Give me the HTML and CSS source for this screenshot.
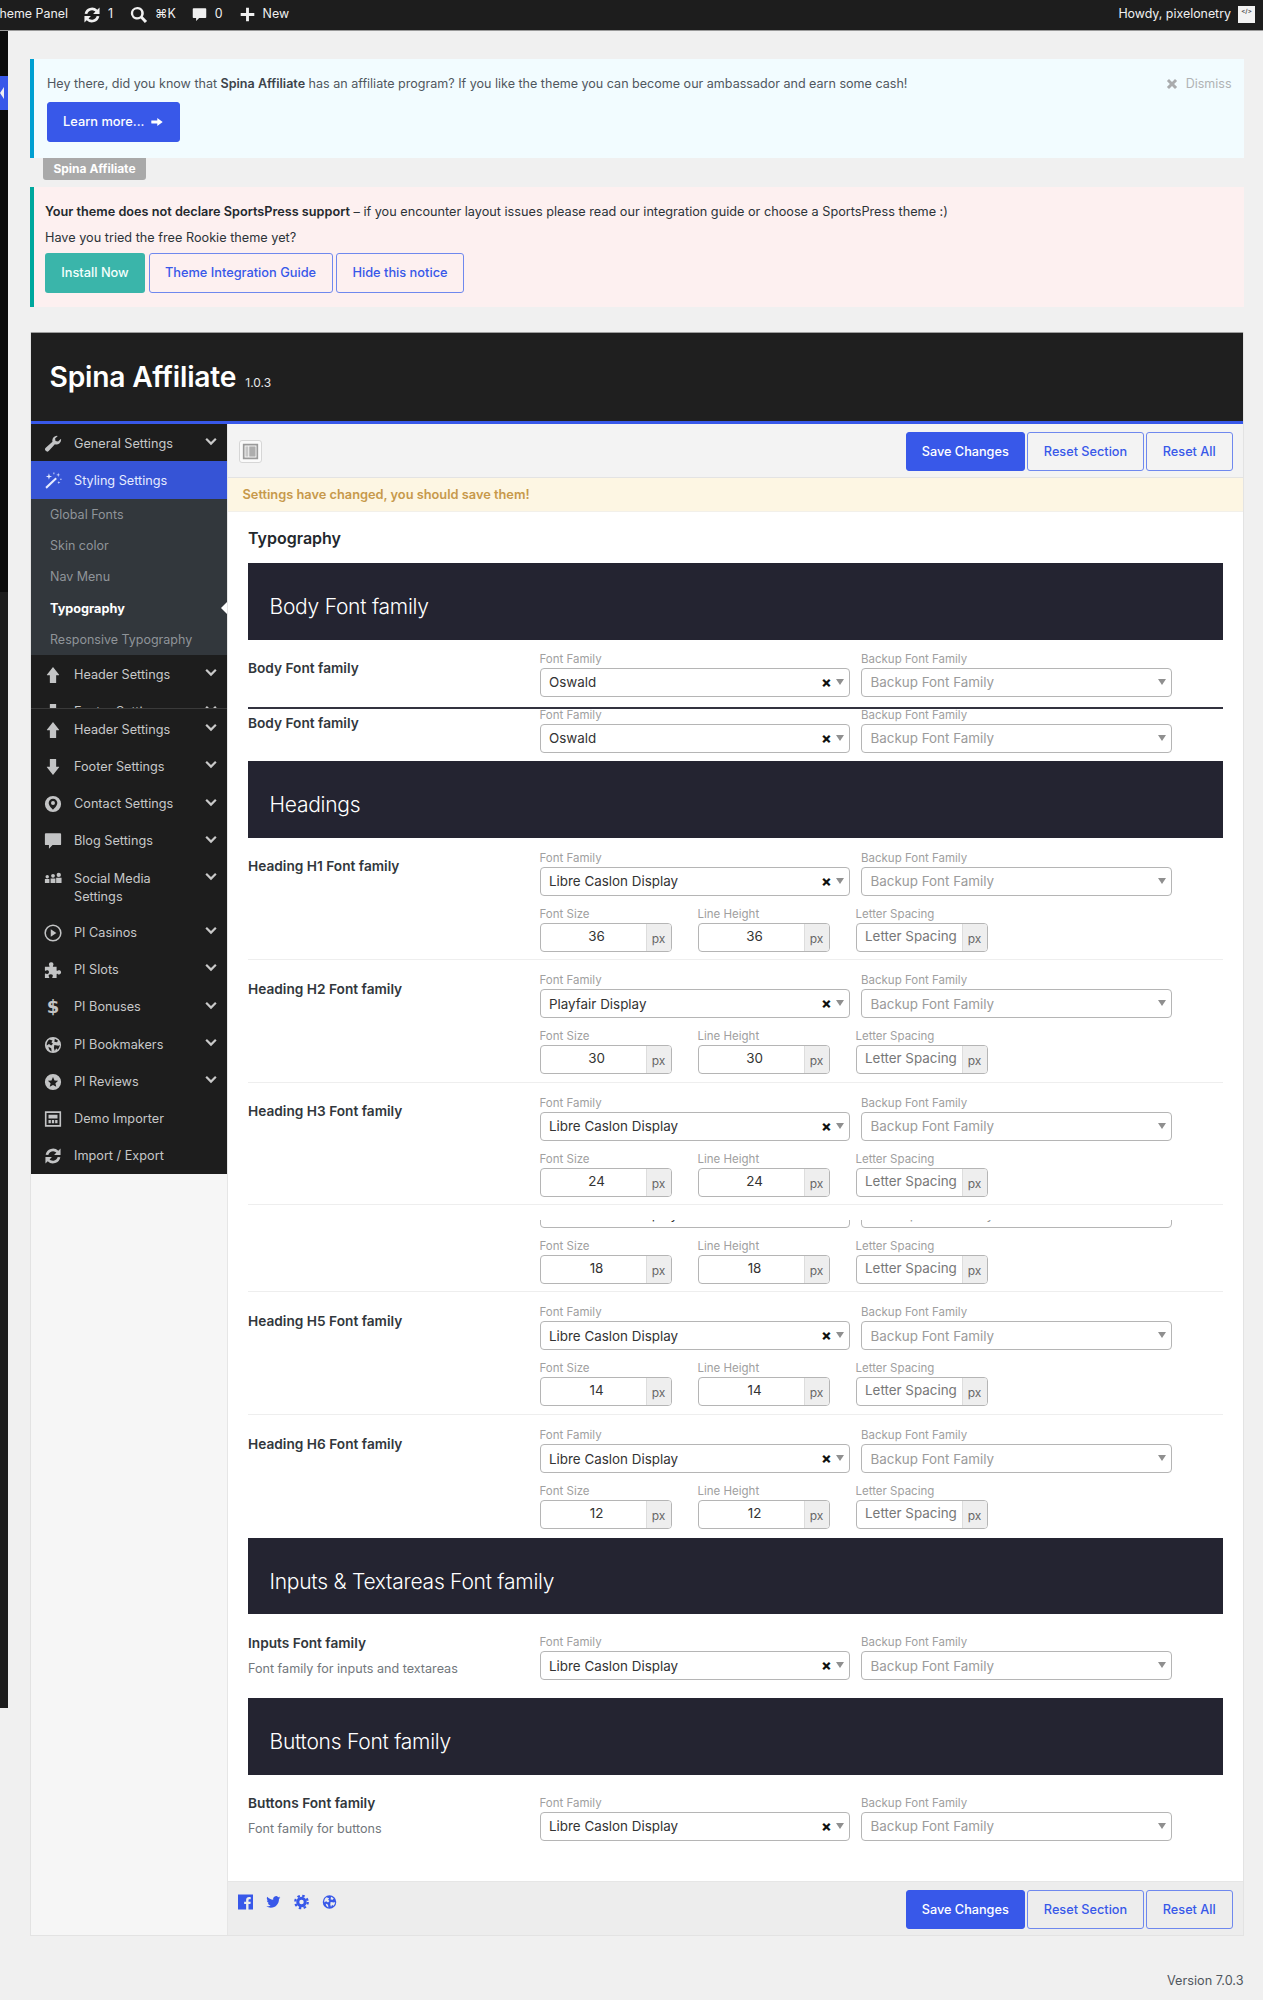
FILE: index.html
```html
<!DOCTYPE html>
<html lang="en">
<head>
<meta charset="utf-8">
<title>Spina Affiliate Theme Panel</title>
<link rel="stylesheet" href="styles.css">
</head>
<body>
<svg class="sprite" width="0" height="0" aria-hidden="true">
  <symbol id="i-wrench" viewBox="0 0 20 20"><path d="M19 4.800a5.200 5.200 0 0 1-6.900 5.400L5.200 17.700a2.300 2.300 0 0 1-3.300-.1 2.300 2.300 0 0 1 0-3.300l7.500-6.900A5.200 5.200 0 0 1 15.300 1l-3 2.800.5 2.800 2.800.6 3-2.800c.3.100.4.300.4.400z"/></symbol>
  <symbol id="i-wand" viewBox="0 0 20 20"><path d="M1.500 16.800 12.800 6.200l1.500 1.600L3 18.500z"/><path d="M5.500 1.500l.8 2.700 2.700.8-2.700.8-.8 2.700-.8-2.700L2 5l2.700-.8zM15.800 .8l.5 1.900 1.900.5-1.900.5-.5 1.900-.5-1.900-1.900-.5 1.900-.5zM16.500 10l.4 1.300 1.300.4-1.300.4-.4 1.300-.4-1.300-1.300-.4 1.300-.4zM10.500 .5h1v2h-1zM18 7.500h1.500v1H18z"/></symbol>
  <symbol id="i-up" viewBox="0 0 20 20"><path d="M10 1l6.800 8.800c.2.300 0 .6-.3.600h-3v8.100c0 .3-.2.500-.5.500H7c-.3 0-.5-.2-.5-.5v-8.100h-3c-.3 0-.5-.3-.3-.6z"/></symbol>
  <symbol id="i-down" viewBox="0 0 20 20"><path d="M10 19l6.800-8.800c.2-.3 0-.6-.3-.6h-3V1.500c0-.3-.2-.5-.5-.5H7c-.3 0-.5.200-.5.500v8.100h-3c-.3 0-.5.300-.3.600z"/></symbol>
  <symbol id="i-marker" viewBox="0 0 20 20"><path fill-rule="evenodd" d="M10 1a9 9 0 1 0 0 18 9 9 0 1 0 0-18zM10 4.200A4.800 4.800 0 0 0 5.200 9c0 3.200 4.800 7.500 4.800 7.500s4.800-4.300 4.800-7.500A4.800 4.800 0 0 0 10 4.200z"/><circle cx="10" cy="9" r="2.200"/></symbol>
  <symbol id="i-comment" viewBox="0 0 20 20"><path d="M2 1.500h16c.6 0 1 .4 1 1v11c0 .6-.4 1-1 1H9.500L5.500 18.500v-4H2c-.6 0-1-.4-1-1v-11c0-.6.4-1 1-1z"/></symbol>
  <symbol id="i-group" viewBox="0 0 20 20"><circle cx="3.600" cy="7.500" r="1.900"/><circle cx="10" cy="6.500" r="2.100"/><circle cx="16.400" cy="5.500" r="2.400"/><path d="M1 10h5v4.500H1zM7.300 9.500h5.400v5H7.300zM13.500 8.500h6v6h-6z"/></symbol>
  <symbol id="i-play" viewBox="0 0 20 20"><circle cx="10" cy="10" r="8.700" fill="none" stroke="currentColor" stroke-width="1.700"/><path d="M7.500 5.800l6.300 4.200-6.300 4.200z"/></symbol>
  <symbol id="i-puzzle" viewBox="0 0 20 20"><path d="M1 6.500h4.500c.8 0 .8-.8.300-1.500-.8-1.200-.3-3.500 2.200-3.500s3 2.300 2.200 3.500c-.5.700-.5 1.500.3 1.500H14v3.800c0 .8.800.8 1.500.3 1.200-.8 3.500-.3 3.500 2s-2.300 2.800-3.500 2c-.7-.5-1.500-.5-1.500.3V19H9.800c-.8 0-.8-.8-.3-1.500.8-1.200.3-2.800-2-2.800s-2.800 1.600-2 2.800c.5.700.5 1.500-.3 1.500H1v-4.600c0-.8.800-.8 1.500-.3 1.200.8 3 .3 3-1.800s-1.800-2.600-3-1.800c-.7.500-1.500.5-1.500-.3z"/></symbol>
  <symbol id="i-globe" viewBox="0 0 20 20"><path fill-rule="evenodd" d="M10 1a9 9 0 1 0 0 18 9 9 0 1 0 0-18zM6 3.800l3.500 1.200L8.200 7l1.800 1.500L8 10.500 5.500 9 3 10.500C2.800 7.500 4 5 6 3.800zM12 3l3.500 2-1 2-3-.5zM11.500 10l4.500.8 1.500-.8c0 2-1 4-2.500 5.200l-1.500-1.500-1.500 3-1-3.500zM5 12l3 1.500.5 3.800C6.500 16.500 5 14.500 5 12z"/></symbol>
  <symbol id="i-star" viewBox="0 0 20 20"><path fill-rule="evenodd" d="M10 1a9 9 0 1 0 0 18 9 9 0 1 0 0-18zM10 4.500l1.700 3.700 4 .4-3 2.700.9 4L10 13.300l-3.600 2 .9-4-3-2.700 4-.4z"/></symbol>
  <symbol id="i-demo" viewBox="0 0 20 20"><path fill-rule="evenodd" d="M1 1.500h18v17H1zM2.800 3.200v13.600h14.400V3.200z"/><path d="M5 5.200h10v4.300H5zM5 11h2.600v3.800H5zM8.700 11h2.600v3.800H8.700zM12.400 11H15v3.800h-2.600z"/></symbol>
  <symbol id="i-refresh" viewBox="0 0 20 20"><path d="M1.800 8.500A8.400 8.400 0 0 1 15.900 4.100L18.400 1.600v7.200h-7.200l2.600-2.600A5.500 5.500 0 0 0 4.800 8.800zM18.200 11.500A8.400 8.400 0 0 1 4.100 15.900L1.600 18.400v-7.200h7.200l-2.600 2.600A5.500 5.500 0 0 0 15.200 11.200z"/></symbol>
  <symbol id="i-search" viewBox="0 0 20 20"><path fill-rule="evenodd" d="M8 1a7 7 0 1 0 3.900 12.800l4.600 5.200 2.500-2.300-4.800-5A7 7 0 0 0 8 1zM8 3.500a4.500 4.500 0 1 1 0 9 4.500 4.500 0 0 1 0-9z"/></symbol>
  <symbol id="i-plus" viewBox="0 0 20 20"><path d="M8.300 2h3.400v6.300H18v3.400h-6.300V18H8.300v-6.300H2V8.300h6.300z"/></symbol>
  <symbol id="i-close" viewBox="0 0 20 20"><path d="M5 1.500L10 6.500l5-5L18.500 5l-5 5 5 5-3.500 3.500-5-5-5 5L1.500 15l5-5-5-5z"/></symbol>
  <symbol id="i-chevron" viewBox="0 0 20 20"><path d="M2 6.500l2.200-2.200L10 10l5.800-5.700L18 6.500l-8 8z"/></symbol>
  <symbol id="i-arrow" viewBox="0 0 20 20"><path d="M1 7.700h9.500V3.500L19.500 10l-9 6.500v-4.200H1c-.4 0-.5-.2-.5-.5V8.200c0-.3.100-.5.500-.5z"/></symbol>
  <symbol id="i-layout" viewBox="0 0 20 20"><path fill-rule="evenodd" d="M1 1h18v18H1zM3 3v14h14V3z"/><path d="M4 4h3.500v12H4z" opacity=".55"/><path d="M8.500 4H16v12H8.500z" opacity=".8"/></symbol>
  <symbol id="i-facebook" viewBox="0 0 20 20"><path fill-rule="evenodd" d="M0 0h20v20H0zM14 20v-7.500h2.600l.4-3h-3V7.700c0-.9.300-1.500 1.500-1.500H17V3.500c-.3 0-1.200-.1-2.300-.1-2.300 0-3.900 1.400-3.900 4v2.100H8.200v3h2.600V20z"/></symbol>
  <symbol id="i-twitter" viewBox="0 0 24 24"><path d="M23 4.900c-.8.400-1.700.6-2.600.7.900-.6 1.600-1.400 2-2.500-.9.500-1.800.9-2.900 1.100a4.600 4.600 0 0 0-7.900 4.200C7.800 8.200 4.400 6.400 2.100 3.600a4.600 4.600 0 0 0 1.400 6.100c-.7 0-1.400-.2-2.100-.6v.1c0 2.200 1.600 4.100 3.700 4.500-.7.200-1.400.2-2.100.1.600 1.800 2.300 3.200 4.300 3.200A9.300 9.300 0 0 1 .5 18.900 13 13 0 0 0 7.600 21c8.400 0 13.100-7.100 13.100-13.200v-.6c.9-.7 1.700-1.500 2.300-2.300z"/></symbol>
  <symbol id="i-gear" viewBox="0 0 20 20"><circle cx="10" cy="10" r="5" fill="none" stroke="currentColor" stroke-width="4"/><circle cx="10" cy="10" r="8.300" fill="none" stroke="currentColor" stroke-width="3" stroke-dasharray="3.300 3.220"/></symbol>
</svg>

<header class="adminbar">
  <div class="ab-left">
    <span class="ab-clipped"><span>Theme Panel</span></span>
    <svg class="ab-icon ab-refresh"><use href="#i-refresh"/></svg><span class="ab-num">1</span>
    <svg class="ab-icon ab-search"><use href="#i-search"/></svg><span class="ab-num">⌘K</span>
    <svg class="ab-icon ab-comment"><use href="#i-comment"/></svg><span class="ab-num ab-zero">0</span>
    <svg class="ab-icon ab-plus"><use href="#i-plus"/></svg><span class="ab-num">New</span>
  </div>
  <div class="ab-right">
    <span>Howdy, pixelonetry</span>
    <span class="avatar">&lt;/&gt;</span>
  </div>
</header>

<div class="page">
  <aside class="adminmenu">
    <div class="adminmenu-dark"></div>
    <div class="adminmenu-marker"></div>
  </aside>

  <main class="main">
    <section class="notice notice-info">
      <p class="notice-text">Hey there, did you know that <strong>Spina Affiliate</strong> has an affiliate program? If you like the theme you can become our ambassador and earn some cash!</p>
      <a class="btn btn-primary btn-learn">Learn more... <svg class="arrow"><use href="#i-arrow"/></svg></a>
      <a class="dismiss"><svg class="dismiss-icon"><use href="#i-close"/></svg>Dismiss</a>
    </section>
    <div class="tag">Spina Affiliate</div>

    <section class="notice notice-sports">
      <p class="sports-line"><strong>Your theme does not declare SportsPress support</strong> – if you encounter layout issues please read our integration guide or choose a SportsPress theme :)</p>
      <p class="sports-line second">Have you tried the free Rookie theme yet?</p>
      <div class="notice-actions">
        <a class="btn btn-teal">Install Now</a>
        <a class="btn btn-outline">Theme Integration Guide</a>
        <a class="btn btn-outline">Hide this notice</a>
      </div>
    </section>

    <section class="panel">
      <header class="panel-header">
        <h1 class="panel-title">Spina Affiliate</h1>
        <span class="panel-version">1.0.3</span>
      </header>
      <div class="panel-body">
        <nav class="side">
          <div class="side-top">
            <a class="nav-item"><svg class="nav-icon"><use href="#i-wrench"/></svg><span class="nav-label">General Settings</span><svg class="chev"><use href="#i-chevron"/></svg></a>
            <a class="nav-item active"><svg class="nav-icon"><use href="#i-wand"/></svg><span class="nav-label">Styling Settings</span></a>
            <div class="subnav">
              <a class="sub-item">Global Fonts</a>
              <a class="sub-item">Skin color</a>
              <a class="sub-item">Nav Menu</a>
              <a class="sub-item current">Typography</a>
              <a class="sub-item">Responsive Typography</a>
            </div>
            <a class="nav-item"><svg class="nav-icon"><use href="#i-up"/></svg><span class="nav-label">Header Settings</span><svg class="chev"><use href="#i-chevron"/></svg></a>
            <a class="nav-item"><svg class="nav-icon"><use href="#i-down"/></svg><span class="nav-label">Footer Settings</span><svg class="chev"><use href="#i-chevron"/></svg></a>
          </div>
          <div class="side-rest">
            <a class="nav-item"><svg class="nav-icon"><use href="#i-up"/></svg><span class="nav-label">Header Settings</span><svg class="chev"><use href="#i-chevron"/></svg></a>
            <a class="nav-item"><svg class="nav-icon"><use href="#i-down"/></svg><span class="nav-label">Footer Settings</span><svg class="chev"><use href="#i-chevron"/></svg></a>
            <a class="nav-item"><svg class="nav-icon"><use href="#i-marker"/></svg><span class="nav-label">Contact Settings</span><svg class="chev"><use href="#i-chevron"/></svg></a>
            <a class="nav-item"><svg class="nav-icon"><use href="#i-comment"/></svg><span class="nav-label">Blog Settings</span><svg class="chev"><use href="#i-chevron"/></svg></a>
            <a class="nav-item nav-tall"><svg class="nav-icon"><use href="#i-group"/></svg><span class="nav-label">Social Media<br>Settings</span><svg class="chev"><use href="#i-chevron"/></svg></a>
            <a class="nav-item"><svg class="nav-icon"><use href="#i-play"/></svg><span class="nav-label">PI Casinos</span><svg class="chev"><use href="#i-chevron"/></svg></a>
            <a class="nav-item"><svg class="nav-icon"><use href="#i-puzzle"/></svg><span class="nav-label">PI Slots</span><svg class="chev"><use href="#i-chevron"/></svg></a>
            <a class="nav-item"><span class="nav-icon nav-dollar">$</span><span class="nav-label">PI Bonuses</span><svg class="chev"><use href="#i-chevron"/></svg></a>
            <a class="nav-item"><svg class="nav-icon"><use href="#i-globe"/></svg><span class="nav-label">PI Bookmakers</span><svg class="chev"><use href="#i-chevron"/></svg></a>
            <a class="nav-item"><svg class="nav-icon"><use href="#i-star"/></svg><span class="nav-label">PI Reviews</span><svg class="chev"><use href="#i-chevron"/></svg></a>
            <a class="nav-item"><svg class="nav-icon"><use href="#i-demo"/></svg><span class="nav-label">Demo Importer</span></a>
            <a class="nav-item"><svg class="nav-icon"><use href="#i-refresh"/></svg><span class="nav-label">Import / Export</span></a>
          </div>
        </nav>

        <div class="content">
          <div class="toolbar">
            <span class="expand"><svg class="expand-icon"><use href="#i-layout"/></svg></span>
            <div class="actions">
              <a class="btn btn-primary btn-save">Save Changes</a>
              <a class="btn btn-outline btn-reset">Reset Section</a>
              <a class="btn btn-outline btn-reset">Reset All</a>
            </div>
          </div>
          <div class="warning">Settings have changed, you should save them!</div>

          <div class="fields">
            <h2 class="section-title">Typography</h2>

            <div class="band">Body Font family</div>
            <div class="row row-body">
              <div class="row-label">Body Font family</div>
              <div class="controls">
                <div class="pair">
                  <div class="field"><label class="flabel">Font Family</label><div class="select"><span class="sval">Oswald</span><span class="sx">×</span><span class="caret"></span></div></div>
                  <div class="field"><label class="flabel">Backup Font Family</label><div class="select"><span class="sval ph">Backup Font Family</span><span class="caret"></span></div></div>
                </div>
              </div>
            </div>
            <div class="row row-body-repeat">
              <div class="row-label">Body Font family</div>
              <div class="controls">
                <div class="pair">
                  <div class="field"><label class="flabel">Font Family</label><div class="select"><span class="sval">Oswald</span><span class="sx">×</span><span class="caret"></span></div></div>
                  <div class="field"><label class="flabel">Backup Font Family</label><div class="select"><span class="sval ph">Backup Font Family</span><span class="caret"></span></div></div>
                </div>
              </div>
            </div>

            <div class="band">Headings</div>

            <div class="row row-heading">
              <div class="row-label">Heading H1 Font family</div>
              <div class="controls">
                <div class="pair">
                  <div class="field"><label class="flabel">Font Family</label><div class="select"><span class="sval">Libre Caslon Display</span><span class="sx">×</span><span class="caret"></span></div></div>
                  <div class="field"><label class="flabel">Backup Font Family</label><div class="select"><span class="sval ph">Backup Font Family</span><span class="caret"></span></div></div>
                </div>
                <div class="sizes">
                  <div class="sfield"><label class="flabel">Font Size</label><div class="igroup"><span class="ival">36</span><span class="addon">px</span></div></div>
                  <div class="sfield"><label class="flabel">Line Height</label><div class="igroup"><span class="ival">36</span><span class="addon">px</span></div></div>
                  <div class="sfield"><label class="flabel">Letter Spacing</label><div class="igroup"><span class="ival ls">Letter Spacing</span><span class="addon">px</span></div></div>
                </div>
              </div>
            </div>

            <div class="row row-heading">
              <div class="row-label">Heading H2 Font family</div>
              <div class="controls">
                <div class="pair">
                  <div class="field"><label class="flabel">Font Family</label><div class="select"><span class="sval">Playfair Display</span><span class="sx">×</span><span class="caret"></span></div></div>
                  <div class="field"><label class="flabel">Backup Font Family</label><div class="select"><span class="sval ph">Backup Font Family</span><span class="caret"></span></div></div>
                </div>
                <div class="sizes">
                  <div class="sfield"><label class="flabel">Font Size</label><div class="igroup"><span class="ival">30</span><span class="addon">px</span></div></div>
                  <div class="sfield"><label class="flabel">Line Height</label><div class="igroup"><span class="ival">30</span><span class="addon">px</span></div></div>
                  <div class="sfield"><label class="flabel">Letter Spacing</label><div class="igroup"><span class="ival ls">Letter Spacing</span><span class="addon">px</span></div></div>
                </div>
              </div>
            </div>

            <div class="row row-heading">
              <div class="row-label">Heading H3 Font family</div>
              <div class="controls">
                <div class="pair">
                  <div class="field"><label class="flabel">Font Family</label><div class="select"><span class="sval">Libre Caslon Display</span><span class="sx">×</span><span class="caret"></span></div></div>
                  <div class="field"><label class="flabel">Backup Font Family</label><div class="select"><span class="sval ph">Backup Font Family</span><span class="caret"></span></div></div>
                </div>
                <div class="sizes">
                  <div class="sfield"><label class="flabel">Font Size</label><div class="igroup"><span class="ival">24</span><span class="addon">px</span></div></div>
                  <div class="sfield"><label class="flabel">Line Height</label><div class="igroup"><span class="ival">24</span><span class="addon">px</span></div></div>
                  <div class="sfield"><label class="flabel">Letter Spacing</label><div class="igroup"><span class="ival ls">Letter Spacing</span><span class="addon">px</span></div></div>
                </div>
              </div>
            </div>

            <div class="row row-cut">
              <div class="row-label"></div>
              <div class="controls">
                <div class="pair pair-cut">
                  <div class="field"><div class="select"><span class="sval">Libre Caslon Display</span></div></div>
                  <div class="field"><div class="select"><span class="sval ph">Backup Font Family</span></div></div>
                </div>
                <div class="sizes">
                  <div class="sfield"><label class="flabel">Font Size</label><div class="igroup"><span class="ival">18</span><span class="addon">px</span></div></div>
                  <div class="sfield"><label class="flabel">Line Height</label><div class="igroup"><span class="ival">18</span><span class="addon">px</span></div></div>
                  <div class="sfield"><label class="flabel">Letter Spacing</label><div class="igroup"><span class="ival ls">Letter Spacing</span><span class="addon">px</span></div></div>
                </div>
              </div>
            </div>

            <div class="row row-heading">
              <div class="row-label">Heading H5 Font family</div>
              <div class="controls">
                <div class="pair">
                  <div class="field"><label class="flabel">Font Family</label><div class="select"><span class="sval">Libre Caslon Display</span><span class="sx">×</span><span class="caret"></span></div></div>
                  <div class="field"><label class="flabel">Backup Font Family</label><div class="select"><span class="sval ph">Backup Font Family</span><span class="caret"></span></div></div>
                </div>
                <div class="sizes">
                  <div class="sfield"><label class="flabel">Font Size</label><div class="igroup"><span class="ival">14</span><span class="addon">px</span></div></div>
                  <div class="sfield"><label class="flabel">Line Height</label><div class="igroup"><span class="ival">14</span><span class="addon">px</span></div></div>
                  <div class="sfield"><label class="flabel">Letter Spacing</label><div class="igroup"><span class="ival ls">Letter Spacing</span><span class="addon">px</span></div></div>
                </div>
              </div>
            </div>

            <div class="row row-heading row-last">
              <div class="row-label">Heading H6 Font family</div>
              <div class="controls">
                <div class="pair">
                  <div class="field"><label class="flabel">Font Family</label><div class="select"><span class="sval">Libre Caslon Display</span><span class="sx">×</span><span class="caret"></span></div></div>
                  <div class="field"><label class="flabel">Backup Font Family</label><div class="select"><span class="sval ph">Backup Font Family</span><span class="caret"></span></div></div>
                </div>
                <div class="sizes">
                  <div class="sfield"><label class="flabel">Font Size</label><div class="igroup"><span class="ival">12</span><span class="addon">px</span></div></div>
                  <div class="sfield"><label class="flabel">Line Height</label><div class="igroup"><span class="ival">12</span><span class="addon">px</span></div></div>
                  <div class="sfield"><label class="flabel">Letter Spacing</label><div class="igroup"><span class="ival ls">Letter Spacing</span><span class="addon">px</span></div></div>
                </div>
              </div>
            </div>

            <div class="band">Inputs &amp; Textareas Font family</div>
            <div class="row row-desc row-inputs">
              <div class="row-label">Inputs Font family<span class="row-desc-text">Font family for inputs and textareas</span></div>
              <div class="controls">
                <div class="pair">
                  <div class="field"><label class="flabel">Font Family</label><div class="select"><span class="sval">Libre Caslon Display</span><span class="sx">×</span><span class="caret"></span></div></div>
                  <div class="field"><label class="flabel">Backup Font Family</label><div class="select"><span class="sval ph">Backup Font Family</span><span class="caret"></span></div></div>
                </div>
              </div>
            </div>

            <div class="band">Buttons Font family</div>
            <div class="row row-desc row-buttons">
              <div class="row-label">Buttons Font family<span class="row-desc-text">Font family for buttons</span></div>
              <div class="controls">
                <div class="pair">
                  <div class="field"><label class="flabel">Font Family</label><div class="select"><span class="sval">Libre Caslon Display</span><span class="sx">×</span><span class="caret"></span></div></div>
                  <div class="field"><label class="flabel">Backup Font Family</label><div class="select"><span class="sval ph">Backup Font Family</span><span class="caret"></span></div></div>
                </div>
              </div>
            </div>
          </div>

          <div class="panel-footer">
            <div class="social">
              <svg class="social-icon"><use href="#i-facebook"/></svg>
              <svg class="social-icon"><use href="#i-twitter"/></svg>
              <svg class="social-icon"><use href="#i-gear"/></svg>
              <svg class="social-icon"><use href="#i-globe"/></svg>
            </div>
            <div class="actions">
              <a class="btn btn-primary btn-save">Save Changes</a>
              <a class="btn btn-outline btn-reset">Reset Section</a>
              <a class="btn btn-outline btn-reset">Reset All</a>
            </div>
          </div>
        </div>
      </div>
    </section>

    <footer class="version">Version 7.0.3</footer>
  </main>
</div>
</body>
</html>
```
FILE: styles.css
```css
* { box-sizing: border-box; }
html, body { margin: 0; padding: 0; }
body {
  height: 2000px;
  overflow: hidden;
  background: #f0f0f0;
  font-family: Inter, "Liberation Sans", sans-serif;
  font-size: 12.700px;
  line-height: 1.2;
  color: #3c434a;
}
.sprite { position: absolute; }
svg { fill: currentColor; display: block; }
a { text-decoration: none; }
p { margin: 0; }

/* admin bar */
.adminbar {
  height: 31px;
  background: #1d1d1d;
  border-bottom: 1px solid #9a9a9a;
  color: #f0f0f0;
  font-size: 12.400px;
  display: flex;
  justify-content: space-between;
  align-items: center;
  padding-bottom: 1px;
}
.ab-left, .ab-right { display: flex; align-items: center; }
.ab-clipped { width: 68px; overflow: hidden; display: flex; justify-content: flex-end; white-space: nowrap; }
.ab-clipped span { flex: none; }
.ab-icon { width: 18px; height: 18px; flex: none; }
.ab-refresh { margin-left: 15px; }
.ab-search { margin-left: 17px; }
.ab-comment { margin-left: 16px; width: 15px; height: 17px; }
.ab-plus { margin-left: 16px; width: 17px; height: 17px; }
.ab-num { margin-left: 7px; }
.ab-zero { margin-left: 8px; }
.ab-right { padding-right: 8px; }
.avatar {
  width: 17px; height: 17px; margin-left: 7px;
  background: #f2f2f2; color: #555;
  font-size: 6px; line-height: 10px; text-align: center;
  font-weight: 700;
}

/* page */
.page { display: flex; }
.adminmenu {
  position: relative;
  width: 8px; height: 1677px; flex: none;
  background: #1d1d1d;
}
.adminmenu-dark { height: 561px; background: #0b0b0b; }
.adminmenu-marker {
  position: absolute; left: 0; top: 45px;
  width: 8px; height: 34px; background: #3858e9;
}
.adminmenu-marker::after {
  content: ""; position: absolute; left: 0; top: 11px;
  border: 6px solid transparent;
  border-right: 4px solid #f0f0f0; border-left: 0;
}
.main { width: 1214px; margin-left: 21.500px; padding-top: 28px; }

/* buttons */
.btn {
  display: inline-flex; align-items: center; justify-content: center;
  height: 40px; border-radius: 3px; font-size: 12.800px; font-weight: 500;
  white-space: nowrap;
}
.btn-primary { background: #3858e9; color: #fff; border: 1px solid #3858e9; }
.btn-teal { background: #3ab5aa; color: #f4fffd; width: 100px; }
.btn-outline { color: #3858e9; border: 1.500px solid #6f88ee; }

/* notices */
.notice { position: relative; border-left: 4px solid #00a0d2; }
.notice-info { height: 99px; background: #f2fcff; padding: 17px 13.500px 0; }
.notice-text { line-height: 16px; color: #50575e; font-size: 12.560px; }
.notice-text strong { font-weight: 600; color: #3c434a; }
.btn-learn { margin-top: 10px; width: 132.500px; gap: 7px; }
.arrow { width: 12px; height: 12px; }
.dismiss {
  position: absolute; right: 12px; top: 17px;
  display: flex; align-items: center; gap: 8px;
  color: #b0b3b5; font-size: 12.500px; line-height: 15px;
}
.dismiss-icon { width: 12px; height: 12px; color: #a9abad; }
.tag {
  width: 103px; height: 22px; margin-left: 13.500px;
  background: #a9a9a9; color: #fff;
  border-radius: 0 0 3px 3px;
  font-size: 12px; font-weight: 700; line-height: 22px; text-align: center;
}
.notice-sports {
  height: 120px; margin-top: 7px; padding: 17px 11.500px 0;
  background: #fdf0f0; border-left-color: #00a79d; color: #2c3338;
}
.sports-line { line-height: 16px; }
.sports-line strong { font-weight: 600; color: #23282d; }
.sports-line.second { margin-top: 10px; }
.notice-actions { display: flex; gap: 3.500px; margin-top: 7px; }
.notice-actions .btn-outline:nth-child(2) { width: 184px; }
.notice-actions .btn-outline:nth-child(3) { width: 128px; }

/* panel */
.panel { margin-top: 25px; border: 1px solid #e3e3e3; border-top: 0; background: #f6f6f6; }
.panel-header {
  height: 92px; background: #1f1f1f; color: #fff;
  border-top: 1px solid #9d9d9d; border-bottom: 3px solid #3858e9;
  display: flex; align-items: center; padding: 0 0 0 19px; gap: 9px;
}
.panel-title { margin: 0; font-size: 28.200px; font-weight: 600; line-height: 36px; letter-spacing: -.2px; }
.panel-version { font-size: 12px; padding-top: 12px; color: #e8e8e8; }
.panel-body { display: flex; align-items: stretch; }

/* side nav */
.side { width: 197px; flex: none; border-right: 1px solid #e6e6e6; }
.side-top { height: 285px; overflow: hidden; background: #1d1d1d; border-bottom: 1px solid #3a3a3a; }
.side-rest { background: #1d1d1d; padding-top: 1px; }
.nav-item {
  display: flex; align-items: flex-start;
  min-height: 37.300px; padding: 10.500px 0 0 13.500px;
  color: #c7c8c9; font-size: 12.700px; line-height: 18px;
  position: relative;
}
.nav-tall { min-height: 54px; }
.nav-item.active { background: #3654d6; color: #e6ebff; }
.nav-icon { width: 18px; height: 18px; flex: none; margin-right: 12px; color: #c3c4c5; }
.active .nav-icon { color: #e6ebff; }
.nav-dollar {
  font-family: "DejaVu Sans", sans-serif; font-weight: 700;
  font-size: 18px; line-height: 17px; text-align: center;
}
.nav-label { flex: 1; }
.chev { position: absolute; left: 173.500px; top: 11px; width: 14px; height: 14px; color: #c9c9c9; }
.subnav { background: #32373c; height: 156.500px; }
.sub-item {
  display: block; height: 31.400px; padding-left: 19.500px;
  line-height: 31px; color: #8f9499; font-size: 12.500px;
}
.sub-item.current { color: #fff; font-weight: 700; position: relative; font-size: 12.700px; }
.sub-item.current::after {
  content: ""; position: absolute; right: 0; top: 9.500px;
  border: 6px solid transparent; border-right-color: #fff; border-left: 0;
}

/* content */
.content { flex: 1; min-width: 0; display: flex; flex-direction: column; background: #fff; }
.toolbar {
  height: 54px; background: #f3f3f3; border-bottom: 1.500px solid #e3e3e3;
  display: flex; justify-content: space-between;
  padding: 8px 10px 0 11px;
}
.expand {
  width: 23px; height: 23px; margin-top: 8px;
  background: #fafafa; border: 1px solid #d6d6d6; border-radius: 3px;
  display: flex; align-items: center; justify-content: center;
}
.expand-icon { width: 17px; height: 17px; color: #9a9a9a; }
.actions { display: flex; gap: 2px; }
.btn-save { width: 119.500px; height: 39px; font-size: 12.700px; }
.btn-reset { height: 39px; padding: 0 16px; font-size: 12.700px; }
.actions .btn-reset:nth-child(2) { width: 117px; }
.actions .btn-reset:nth-child(3) { width: 86.500px; }
.warning {
  height: 34px; background: #fdf6e3; border-bottom: 1px solid #f2f0ea;
  padding-left: 15px; line-height: 34px;
  color: #c7994b; font-size: 12.800px; font-weight: 600;
}
.fields { padding: 0 20px; flex: 1; }
.section-title { margin: 0; height: 51px; padding-left: .5px; font-size: 16px; line-height: 53px; font-weight: 600; color: #23282d; }
.band {
  height: 76.500px; background: #242431; color: #fff;
  padding: 26px 0 0 22px;
  font-size: 21px; font-weight: 300; line-height: 36px; letter-spacing: -.25px;
}

/* rows */
.row { display: flex; }
.row-label {
  width: 292px; flex: none; padding: 21.500px 0 0 .5px;
  font-size: 13.700px; font-weight: 600; line-height: 15px; color: #32373c;
}
.flabel { display: block; height: 15px; font-size: 11.500px; line-height: 12px; color: #a0a0a0; white-space: nowrap; }
.pair { display: flex; gap: 11px; }
.field { width: 310.500px; }
.select {
  position: relative; height: 29px;
  background: #fff; border: 1.500px solid #b5b5b5; border-radius: 4px;
  display: flex; align-items: center; padding-left: 8.500px;
  font-size: 13.400px;
}
.sval { color: #333; white-space: nowrap; }
.sval.ph { color: #9a9a9a; }
.sx { position: absolute; right: 17.500px; top: 3px; font-size: 15px; line-height: 20px; font-weight: 800; color: #111; }
.caret {
  position: absolute; right: 5px; top: 10px;
  border: 4px solid transparent; border-top: 6px solid #8f8f8f; border-bottom: 0;
}
.sizes { display: flex; margin-top: 12px; }
.sfield { width: 158px; }
.igroup {
  width: 132px; height: 29px; display: flex;
  border: 1.500px solid #b5b5b5; border-radius: 4px; overflow: hidden;
  font-size: 13.400px; background: #fff;
}
.ival { flex: 1; text-align: center; line-height: 25px; padding-left: 7px; color: #333; white-space: nowrap; }
.ival.ls { color: #777; text-align: left; padding-left: 8.500px; }
.addon {
  width: 25px; flex: none; background: #eee; border-left: 1px solid #ddd;
  color: #666; font-size: 12px; line-height: 29px; text-align: center;
}

.row-body { height: 67px; padding-top: 13.500px; }
.row-body .row-label { margin-top: -13.500px; }
.row-body-repeat { height: 54.500px; border-top: 2px solid #32323f; }
.row-body-repeat .row-label { padding-top: 7px; }
.row-heading { height: 122.670px; padding-top: 14px; border-bottom: 1.500px solid #eee; }
.row-heading .row-label { margin-top: -14px; }
.row-last { border-bottom: 0; }
.row-cut { height: 87px; padding-top: 15px; border-bottom: 1.500px solid #eee; }
.pair-cut { height: 8px; overflow: hidden; align-items: flex-end; }
.row-desc { padding-top: 22px; }
.row-desc .row-label { margin-top: -22px; }
.row-inputs { height: 84px; }
.row-buttons { height: 106.500px; }
.row-desc-text {
  display: block; margin-top: 10px; font-weight: 400;
  font-size: 12.600px; color: #72777c;
}

/* footer */
.panel-footer {
  height: 53.500px; background: #ededed; border-top: 1px solid #e6e6e6;
  display: flex; justify-content: space-between;
  padding: 8px 10px 0 10.500px;
}
.social { display: flex; gap: 13px; padding-top: 4px; color: #3858e9; }
.social-icon { width: 15px; height: 16px; }
.version { margin-top: 37px; text-align: right; font-size: 12.700px; line-height: 16px; color: #50575e; }
```
